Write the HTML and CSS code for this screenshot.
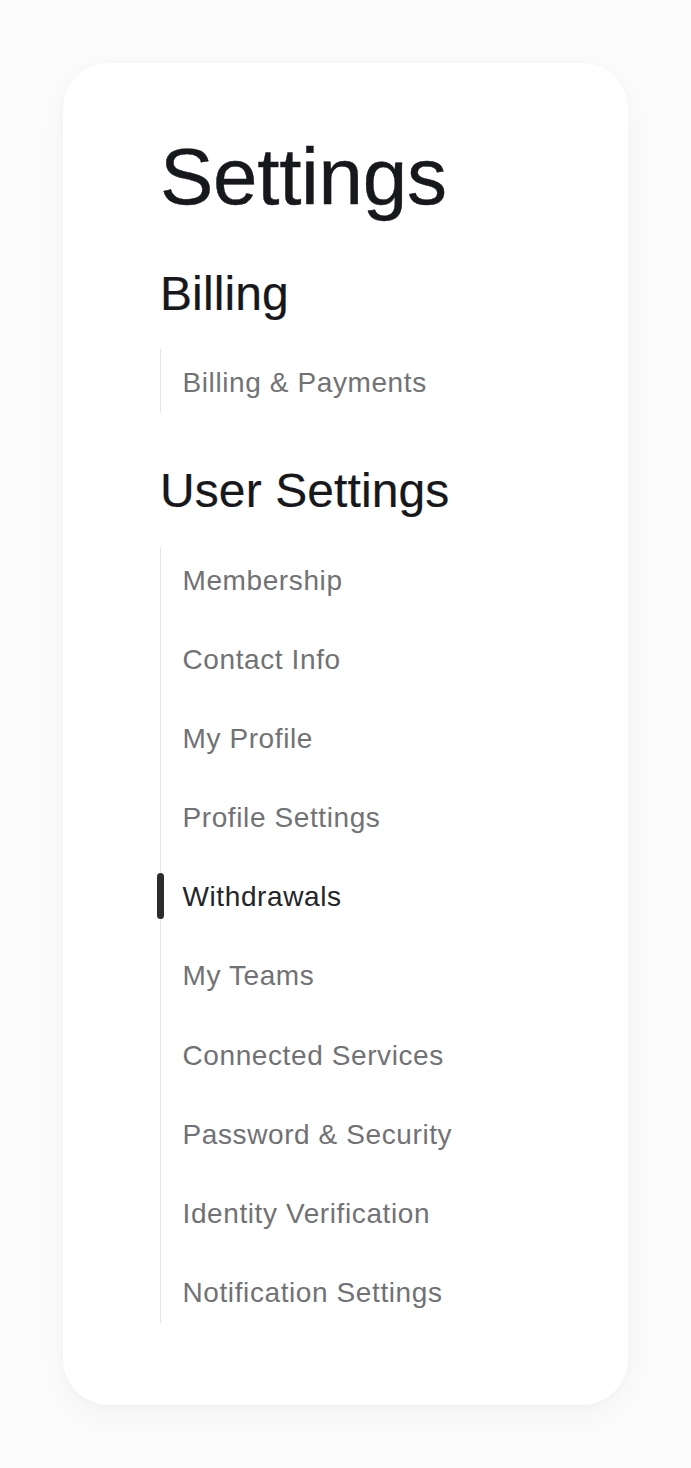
FILE: index.html
```html
<!DOCTYPE html>
<html lang="en">
<head>
<meta charset="utf-8">
<title>Settings</title>
<link rel="stylesheet" href="styles.css">
</head>
<body>
<main class="card">
  <h1 class="title">Settings</h1>
  <section class="group">
    <h2 class="group-title">Billing</h2>
    <ul class="nav">
      <li class="nav-item"><a class="nav-link" href="#">Billing &amp; Payments</a></li>
    </ul>
  </section>
  <section class="group group-user">
    <h2 class="group-title">User Settings</h2>
    <ul class="nav">
      <li class="nav-item"><a class="nav-link" href="#">Membership</a></li>
      <li class="nav-item"><a class="nav-link" href="#">Contact Info</a></li>
      <li class="nav-item"><a class="nav-link" href="#">My Profile</a></li>
      <li class="nav-item"><a class="nav-link" href="#">Profile Settings</a></li>
      <li class="nav-item is-active"><a class="nav-link" href="#">Withdrawals</a></li>
      <li class="nav-item"><a class="nav-link" href="#">My Teams</a></li>
      <li class="nav-item"><a class="nav-link" href="#">Connected Services</a></li>
      <li class="nav-item"><a class="nav-link" href="#">Password &amp; Security</a></li>
      <li class="nav-item"><a class="nav-link" href="#">Identity Verification</a></li>
      <li class="nav-item"><a class="nav-link" href="#">Notification Settings</a></li>
    </ul>
  </section>
</main>
</body>
</html>
```
FILE: styles.css
```css
* {
  box-sizing: border-box;
}

html, body {
  margin: 0;
  padding: 0;
}

body {
  background: #fcfcfc;
  font-family: "Liberation Sans", Arial, sans-serif;
  padding: 63px 63px 63px 63px;
}

.card {
  width: 565px;
  height: 1342px;
  background: #ffffff;
  border-radius: 46px;
  box-shadow: 0 10px 40px rgba(0, 0, 0, 0.045), 0 2px 10px rgba(0, 0, 0, 0.02);
  padding: 74px 0 82px 97px;
  display: flex;
  flex-direction: column;
}

.title {
  margin: 0 0 53px;
  font-size: 80px;
  line-height: 80px;
  font-weight: 400;
  letter-spacing: -0.3px;
  color: #16181c;
  -webkit-text-stroke: 0.4px #16181c;
}

.group-title {
  margin: 0 0 32px;
  font-size: 48px;
  line-height: 47px;
  font-weight: 400;
  letter-spacing: 0.1px;
  color: #16181c;
  -webkit-text-stroke: 0.2px #16181c;
}

.group-user {
  margin-top: 54px;
}

.group-user .group-title {
  margin-bottom: 33px;
}

.nav {
  list-style: none;
  margin: 0;
  padding: 0;
  border-left: 1.5px solid #e4e6e9;
  display: flex;
  flex-direction: column;
  gap: 15.1px;
}

.nav-item {
  position: relative;
}

.nav-link {
  display: block;
  height: 64px;
  line-height: 67px;
  padding-left: 21.5px;
  font-size: 28px;
  letter-spacing: 0.6px;
  color: #717275;
  text-decoration: none;
}

.nav-item.is-active .nav-link {
  color: #23252a;
}

.nav-item.is-active::before {
  content: "";
  position: absolute;
  left: -4px;
  top: 9.5px;
  width: 7px;
  height: 46px;
  border-radius: 4px;
  background: #2b2c30;
}
```
